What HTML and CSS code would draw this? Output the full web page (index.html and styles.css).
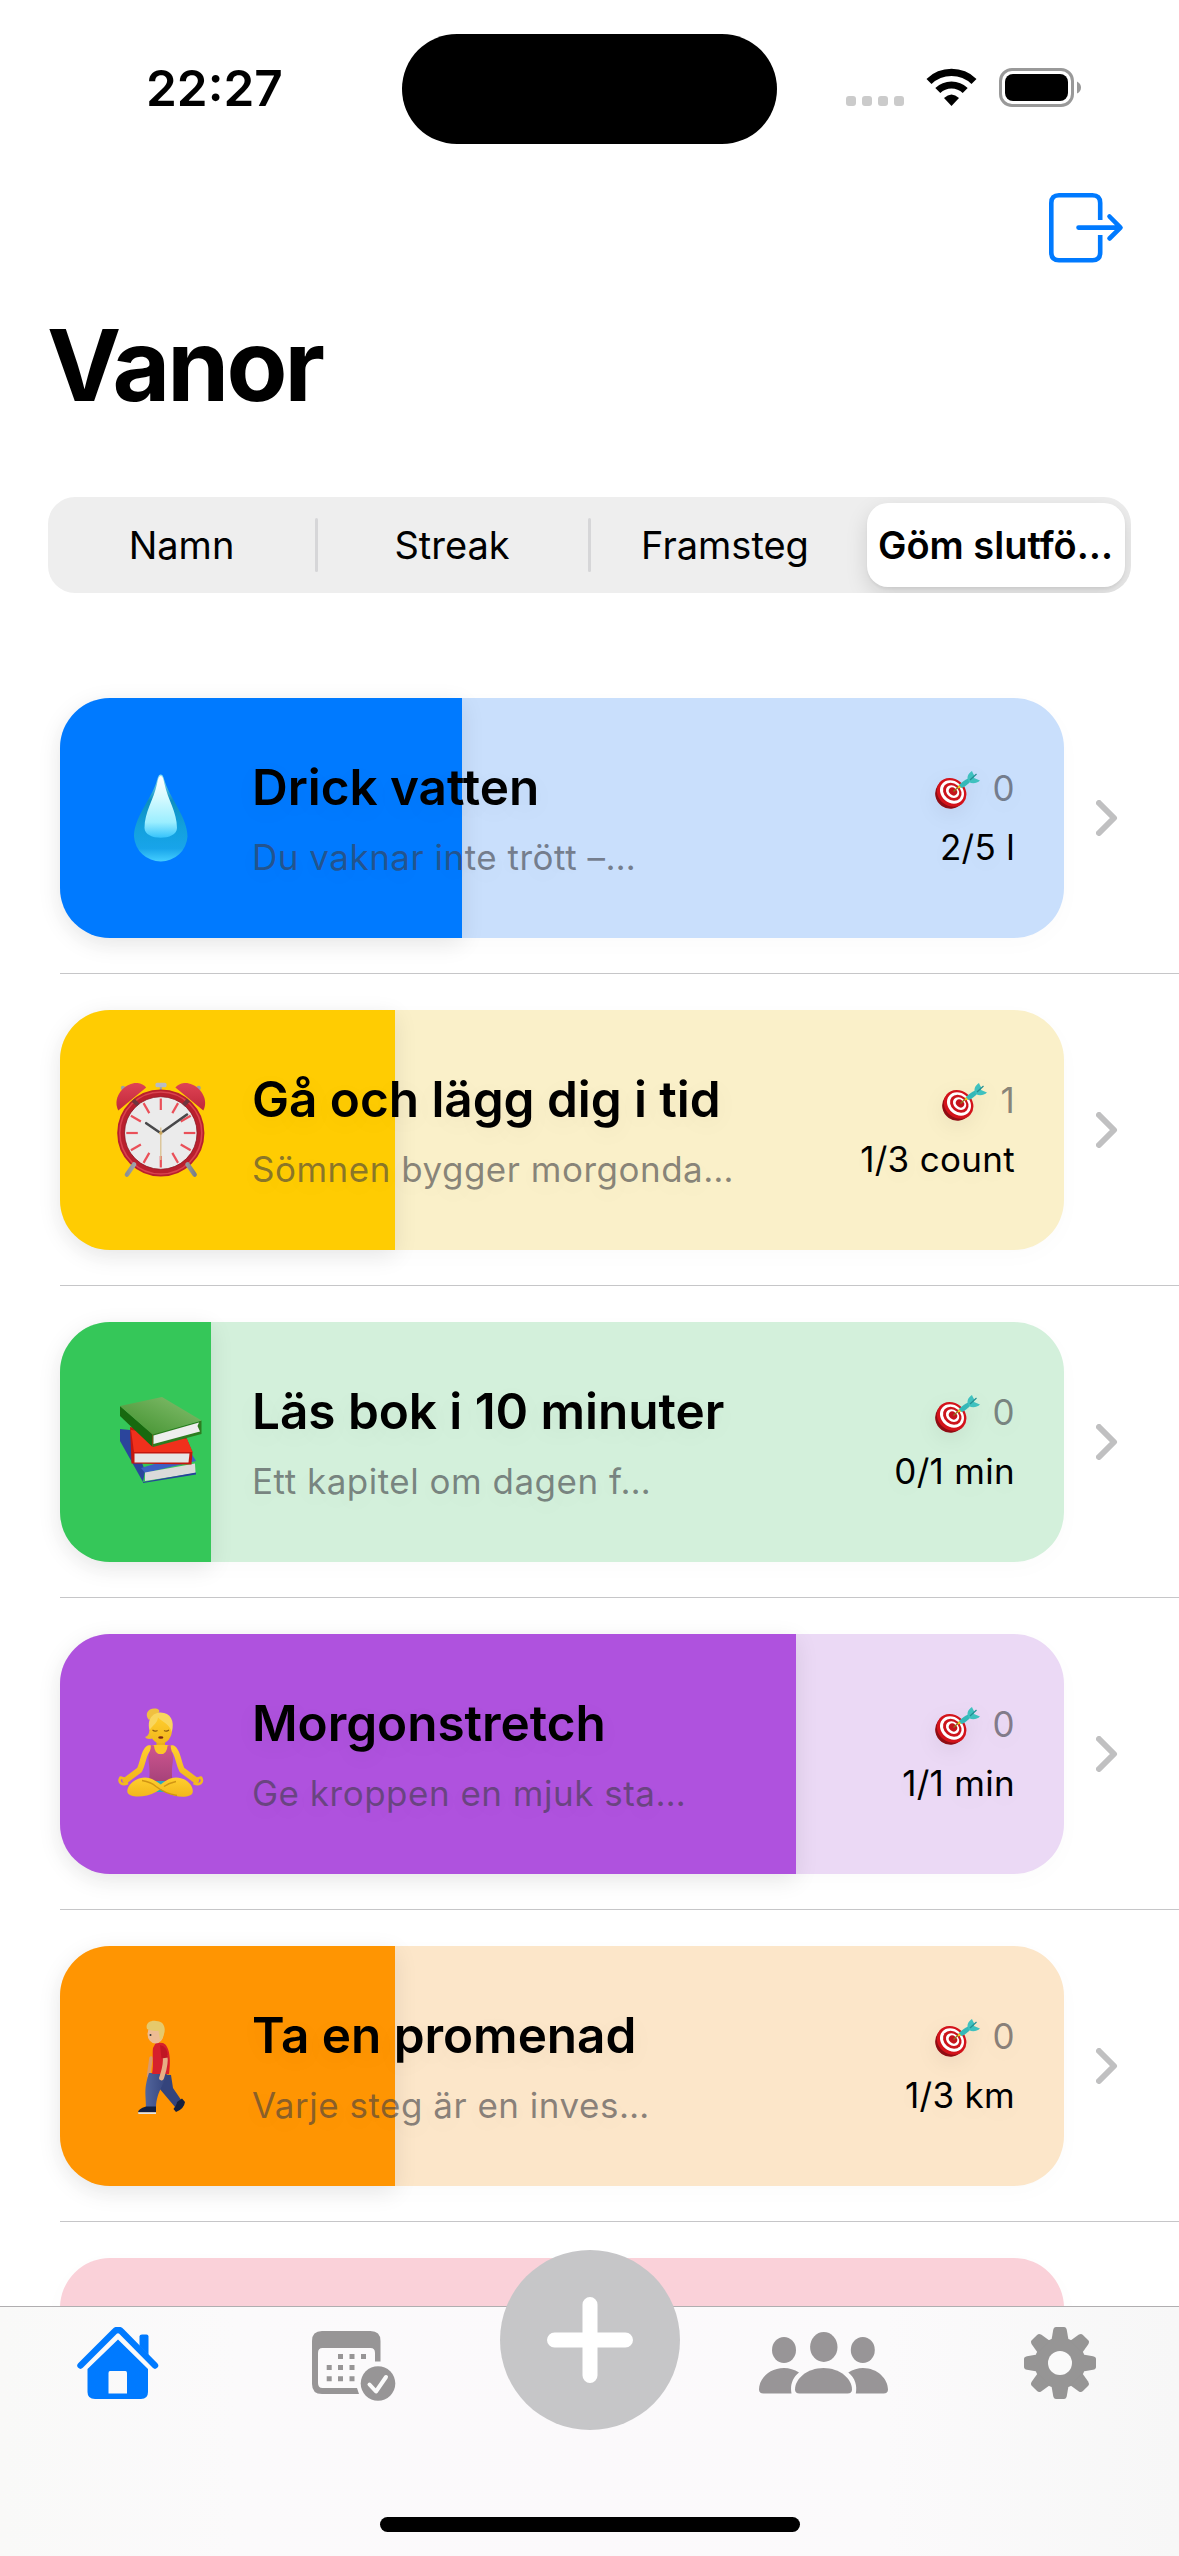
FILE: index.html
```html
<!DOCTYPE html>
<html lang="sv">
<head>
<meta charset="utf-8">
<title>Vanor</title>
<link rel="stylesheet" href="styles.css">
</head>
<body>
<svg width="0" height="0" class="defs" aria-hidden="true">
  <defs>
    <symbol id="target" viewBox="0 0 46 39">
      <ellipse cx="15" cy="23" rx="15" ry="14.5" transform="rotate(35 15 23)" fill="#8f0d14"/>
      <ellipse cx="16.6" cy="21.4" rx="15.6" ry="13.6" transform="rotate(40 16.6 21.4)" fill="#d3131b"/>
      <ellipse cx="17" cy="21" rx="12.8" ry="10.8" transform="rotate(40 17 21)" fill="#fff"/>
      <ellipse cx="17.3" cy="20.8" rx="10" ry="8.2" transform="rotate(40 17.3 20.8)" fill="#cc141c"/>
      <ellipse cx="17.6" cy="20.6" rx="7.2" ry="5.8" transform="rotate(40 17.6 20.6)" fill="#fff"/>
      <ellipse cx="18" cy="20.4" rx="4.5" ry="3.6" transform="rotate(40 18 20.4)" fill="#c4131b"/>
      <path d="M18.5 20.5L25 14.5" stroke="#8a7a20" stroke-width="1.2"/>
      <path d="M22.5 17.5L24 13.5L27 16.5Z" fill="#f2c81e"/>
      <path d="M24 14C27 10.5 31 8.5 34 7L36 10C33 13 30 16 26.5 17Z" fill="#35b8b8"/>
      <path d="M33 9C31.5 5 34 2 37 0C38 3 40 4 39 7L45 9.5C42 12.5 37 13 34 11Z" fill="#3fc1bf"/>
      <path d="M35 9L41.5 3" stroke="#258f92" stroke-width="1.2"/>
    </symbol>
    <symbol id="chevron" viewBox="0 0 22 36">
      <path d="M3 3L18 18L3 33" fill="none" stroke="#c0c0c1" stroke-width="6" stroke-linecap="round" stroke-linejoin="round"/>
    </symbol>
    <linearGradient id="dropOuter" x1="0" y1="0" x2="0" y2="1">
      <stop offset="0" stop-color="#8fe4f5"/><stop offset=".3" stop-color="#0d8fc0"/><stop offset=".6" stop-color="#12a0dc"/><stop offset=".85" stop-color="#18a4ea"/><stop offset="1" stop-color="#45ceff"/>
    </linearGradient>
    <linearGradient id="dropInner" x1="0" y1="0" x2="0" y2="1">
      <stop offset="0" stop-color="#fff"/><stop offset=".35" stop-color="#d5faff"/><stop offset=".75" stop-color="#9beeff"/><stop offset="1" stop-color="#35c3fb"/>
    </linearGradient>
    <linearGradient id="bell" x1="0" y1="0" x2="0" y2="1">
      <stop offset="0" stop-color="#df4354"/><stop offset="1" stop-color="#c0283a"/>
    </linearGradient>
    <linearGradient id="leg" x1="0" y1="0" x2="1" y2="0">
      <stop offset="0" stop-color="#8b9096"/><stop offset=".5" stop-color="#e4e7ea"/><stop offset="1" stop-color="#7b8087"/>
    </linearGradient>
    <linearGradient id="bookGreen" x1="0" y1="1" x2="1" y2="0">
      <stop offset="0" stop-color="#3f8f2c"/><stop offset="1" stop-color="#86c070"/>
    </linearGradient>
    <linearGradient id="skin" x1="0" y1="0" x2="0" y2="1">
      <stop offset="0" stop-color="#ffce2e"/><stop offset="1" stop-color="#f2b71c"/>
    </linearGradient>
    <linearGradient id="top" x1="0" y1="0" x2="0" y2="1">
      <stop offset="0" stop-color="#cf568f"/><stop offset="1" stop-color="#a6427a"/>
    </linearGradient>
    <linearGradient id="jeans" x1="0" y1="0" x2="1" y2="0">
      <stop offset="0" stop-color="#52659c"/><stop offset="1" stop-color="#34447c"/>
    </linearGradient>
  </defs>
</svg>

<div class="screen">
  <header class="status">
    <div class="time">22:27</div>
    <div class="island"></div>
    <div class="indicators">
      <svg width="236" height="40" viewBox="0 0 236 40">
        <g fill="#cbcbcb"><rect x="0" y="28" width="10" height="10" rx="3"/><rect x="16" y="28" width="10" height="10" rx="3"/><rect x="32" y="28" width="10" height="10" rx="3"/><rect x="48" y="28" width="10" height="10" rx="3"/></g>
        <g fill="none" stroke="#000" stroke-width="7.2">
          <path d="M83 13.5A32.5 32.5 0 0 1 128 13.5"/>
          <path d="M91.8 22.5A19.8 19.8 0 0 1 119.2 22.5"/>
        </g>
        <path d="M98 30Q105.5 23 113 30L105.5 38Z"/>
        <rect x="154.5" y="1.5" width="72" height="36" rx="11.5" fill="none" stroke="#999" stroke-width="3"/>
        <rect x="159" y="6" width="63" height="27" rx="8"/>
        <path d="M231 13.5Q235 15.5 235 19.5Q235 23.5 231 25.5Z" fill="#999"/>
      </svg>
    </div>
  </header>

  <nav class="toolbar">
    <svg width="76" height="70" viewBox="0 0 76 70" fill="none" stroke="#007aff" stroke-width="4.6" stroke-linejoin="round">
      <path d="M51.2 27V10Q51.2 2.3 43.5 2.3H10Q2.3 2.3 2.3 10V59.5Q2.3 67.2 10 67.2H43.5Q51.2 67.2 51.2 59.5V42"/>
      <path d="M29.5 34.6H71M60.5 23.5L71.5 34.6L60.5 45.5" stroke-linecap="round"/>
    </svg>
  </nav>

  <h1 class="title">Vanor</h1>

  <div class="segments">
    <div class="segment">Namn</div>
    <div class="segment">Streak</div>
    <div class="segment">Framsteg</div>
    <div class="segment selected">Göm slutfö…</div>
  </div>

  <main class="list">
    <section class="row">
      <article class="card blue">
        <div class="fill" style="width:40%"></div>
        <svg class="emoji" viewBox="0 0 96 96">
          <path d="M47.7 4.5C50 4.5 50.7 8 52 12C58 30 74.5 48 74.5 66.5A26.8 26.6 0 0 1 21 66.5C21 48 37.5 30 43.5 12C44.8 8 45.5 4.5 47.7 4.5Z" fill="url(#dropOuter)"/>
          <path d="M47.7 6C50 6 50.5 10 51.5 14C55 30 64 42 64 58C64 71 31.5 71 31.5 58C31.5 42 40.5 30 44 14C45 10 45.5 6 47.7 6Z" fill="url(#dropInner)"/>
        </svg>
        <div class="text"><h2>Drick vatten</h2><p>Du vaknar inte trött –…</p></div>
        <div class="stats"><div class="streak"><svg><use href="#target"/></svg>0</div><div>2/5 l</div></div>
      </article>
      <svg class="chevron"><use href="#chevron"/></svg>
    </section>

    <section class="row">
      <article class="card yellow">
        <div class="fill" style="width:33.333%"></div>
        <svg class="emoji" viewBox="0 0 96 96">
          <path d="M47.8 3V10" stroke="#9a9fa8" stroke-width="2"/><rect x="42.5" y="0.8" width="11" height="4.4" rx="1.5" fill="#b7bcc4"/>
          <circle cx="10" cy="6" r="2.2" fill="#9aa0a6"/><circle cx="85.6" cy="6" r="2.2" fill="#9aa0a6"/>
          <circle cx="47.8" cy="51" r="39.9" fill="#ebebeb" stroke="#b91f2d" stroke-width="7.4"/>
          <circle cx="47.8" cy="51" r="41" fill="none" stroke="#d9424e" stroke-width="1.6"/>
          <circle cx="47.8" cy="51" r="36.3" fill="none" stroke="#8f1a25" stroke-width=".8"/>
          <path d="M20 18L25 23M75.6 18L70.6 23" stroke="#70353d" stroke-width="4"/>
          <path d="M5.3 28.5C-1.5 15 12 0 24.500 1Q30 1.500 33.200 5.500Z" fill="url(#bell)"/>
          <path d="M90.300 28.500C97.100 15 83.600 0 71.100 1Q65.600 1.500 62.400 5.500Z" fill="url(#bell)"/>
          <g stroke="#ea5059" stroke-width="2.2">
            <path id="tick" d="M47.8 16.5V28"/>
            <use href="#tick" transform="rotate(30 47.8 51)"/><use href="#tick" transform="rotate(60 47.8 51)"/><use href="#tick" transform="rotate(90 47.8 51)"/><use href="#tick" transform="rotate(120 47.8 51)"/><use href="#tick" transform="rotate(150 47.8 51)"/><use href="#tick" transform="rotate(180 47.8 51)"/><use href="#tick" transform="rotate(210 47.8 51)"/><use href="#tick" transform="rotate(240 47.8 51)"/><use href="#tick" transform="rotate(270 47.8 51)"/><use href="#tick" transform="rotate(300 47.8 51)"/><use href="#tick" transform="rotate(330 47.8 51)"/>
          </g>
          <path d="M47.8 45.5V78" stroke="#d9c08e" stroke-width="1.3"/>
          <path d="M46 50L33.2 41.2M50 49.5L74 32.5" stroke="#48484a" stroke-width="2.6" stroke-linecap="round"/>
          <circle cx="47.8" cy="51" r="1.8" fill="#c9a55c"/>
          <path d="M21 82.500L14 92.500M74.600 82.500L81.600 92.500" stroke="url(#leg)" stroke-width="4.600" stroke-linecap="round"/>
        </svg>
        <div class="text"><h2>Gå och lägg dig i tid</h2><p>Sömnen bygger morgonda…</p></div>
        <div class="stats"><div class="streak"><svg><use href="#target"/></svg>1</div><div>1/3 count</div></div>
      </article>
      <svg class="chevron"><use href="#chevron"/></svg>
    </section>

    <section class="row">
      <article class="card green">
        <div class="fill" style="width:15%"></div>
        <svg class="emoji" viewBox="0 0 96 96">
          <path d="M7 35L17 36L32 77L30 88L7 47Z" fill="#2b459c"/>
          <path d="M28 74L78 59L83 67L32 79Z" fill="#3d5fc4"/>
          <path d="M32 78.5L82 69.5L82.6 79L32 87Z" fill="#dadada"/>
          <path d="M30 88L83 78.5V80.5L30 89Z" fill="#27429c"/>
          <path d="M17 33L73 43L79.5 58L78.5 70.5L18.5 69.5Z" fill="#c4170f"/>
          <path d="M18 36L74 45L79.5 58L21 58Z" fill="#f0301c"/>
          <path d="M21.5 59.5H76.5L75.5 68.5H21.5Z" fill="#e6e6e6"/>
          <path d="M7 12L39.5 40V53L7 22Z" fill="#17690f"/>
          <path d="M39.5 40L88.5 26.5L88.5 40L40 53Z" fill="#2d7d20"/>
          <path d="M7 12L49 3L88.5 26.5L39.5 40.5Z" fill="url(#bookGreen)"/>
          <path d="M40.5 41.5L86 28.5L84.5 32L87 37.5L40.5 50Z" fill="#eee"/>
        </svg>
        <div class="text"><h2>Läs bok i 10 minuter</h2><p>Ett kapitel om dagen f…</p></div>
        <div class="stats"><div class="streak"><svg><use href="#target"/></svg>0</div><div>0/1 min</div></div>
      </article>
      <svg class="chevron"><use href="#chevron"/></svg>
    </section>

    <section class="row">
      <article class="card purple">
        <div class="fill" style="width:73.3%"></div>
        <svg class="emoji" viewBox="0 0 96 96">
          <path d="M36 14C31 8 35 1.500 43 2.500C48 3.500 47 7 42 9.500Z" fill="#f0c040"/>
          <path d="M36.500 24Q36 30 32 31Q34 34.500 41 32Z" fill="#eebb2c"/>
          <path d="M43.500 33H52V44H43.500Z" fill="#e9ae1c"/>
          <path d="M36 39.500Q47.800 38 59.500 39.500Q60 44 58 48H38Q35.500 44 36 39.500Z" fill="#fcc729"/>
          <path d="M35.500 42.500C30.500 46 30.500 56 26.500 64L12.500 74.500M60 42.500C65 46 65 56 69 64L83 74.500" fill="none" stroke="url(#skin)" stroke-width="6" stroke-linecap="round" stroke-linejoin="round"/>
          <path d="M15 77C8 80 5 76 7.500 71.500L12.500 73M80.500 77C87.500 80 90.500 76 88 71.500L83 73" fill="none" stroke="#f2b920" stroke-width="2.600" stroke-linejoin="round"/>
          <path d="M38 39L41 39.500Q41.500 48 47.800 48.500Q54 48 54.600 39.500L57.600 39C57.600 44 60 47 60 52C60 58 58 62 59.500 76H36C37.500 62 35.500 58 35.500 52C35.500 47 38 44 38 39Z" fill="url(#top)"/>
          <path d="M38 75H59V86H38Z" fill="#2ba7c4"/>
          <path d="M32 71.500C21 71.500 13 81 14.500 86.500C17 92.500 33 91.500 43 86L47.800 83L53 86.500C62 91.500 77 92.500 79.500 87C81.500 81 74 71.500 63 71.500C56 71.500 51 76 47.800 78.500C44 76 39 71.500 32 71.500Z" fill="url(#skin)"/>
          <path d="M29 74.500Q38 76 43 80.500Q52 87.500 64 89.500M63 75.500Q56 77 51 80.500" fill="none" stroke="#d19514" stroke-width="1.300"/>
          <ellipse cx="47.8" cy="23.5" rx="11.300" ry="14" fill="url(#skin)"/>
          <path d="M36.500 24C33.500 11 42 6.500 47.500 6.500C57.500 6.500 62 15 58.800 26C57 19 50 16 45 11.500C44.500 17 39.500 19.500 36.500 24Z" fill="#f9d65e"/>
          <path d="M39.500 24Q42 26 44.500 24.500M51 24.500Q53.500 26 56 24" fill="none" stroke="#8b5a12" stroke-width="1.1"/>
          <ellipse cx="47.8" cy="31.500" rx="2.600" ry="1.200" fill="#7b2715"/>
        </svg>
        <div class="text"><h2>Morgonstretch</h2><p>Ge kroppen en mjuk sta…</p></div>
        <div class="stats"><div class="streak"><svg><use href="#target"/></svg>0</div><div>1/1 min</div></div>
      </article>
      <svg class="chevron"><use href="#chevron"/></svg>
    </section>

    <section class="row">
      <article class="card orange">
        <div class="fill" style="width:33.333%"></div>
        <svg class="emoji" viewBox="0 0 96 96">
          <path d="M38 40L35.5 58" stroke="#d99a6c" stroke-width="3.5" stroke-linecap="round"/>
          <path d="M43.5 56L58 57L60 70L69.5 84L62 89L46 70Z" fill="#34447c"/>
          <path d="M36 55H54C52 66 44 72 43 89H33C33 76 30.5 72 36 55Z" fill="url(#jeans)"/>
          <path d="M33 88.5H43L43 94.5H25Q25 91 33 88.5Z" fill="#15203f"/>
          <path d="M25 94.3H43V96H25.5Z" fill="#e6e6e6"/>
          <path d="M69 80.5L72 84Q71 91 63 94L60.5 91Q64 86 64 84Z" fill="#15203f"/>
          <path d="M43 24.500L50 25C57 28 58 42 56 56H39C41 46 39 36 40 30Z" fill="#d6202c"/>
          <path d="M52 38C53.500 46 51 52 48.500 60" fill="none" stroke="#e7af84" stroke-width="4.800" stroke-linecap="round"/>
          <path d="M47 27Q54.500 28 55 39.500L48.500 40.500Z" fill="#c01623"/>
          <ellipse cx="42.5" cy="16" rx="8" ry="9.5" fill="#edbc93"/>
          <path d="M34 11C32 5 38 2 43 3C51 3 53 10 51 16Q50 21 47 22L45.5 13Q38 13 34 11Z" fill="#e6c96b"/>
          <circle cx="37.5" cy="17" r="1" fill="#333"/>
        </svg>
        <div class="text"><h2>Ta en promenad</h2><p>Varje steg är en inves…</p></div>
        <div class="stats"><div class="streak"><svg><use href="#target"/></svg>0</div><div>1/3 km</div></div>
      </article>
      <svg class="chevron"><use href="#chevron"/></svg>
    </section>

    <section class="row">
      <article class="card pink"></article>
    </section>
  </main>

  <footer class="tabbar">
    <div class="tab">
      <svg width="82" height="73" viewBox="0 0 82 73" fill="#007aff">
        <path d="M3.5 38.5L37.5 4.5Q41 1.2 44.5 4.5L78 38.5" fill="none" stroke="#007aff" stroke-width="6.4" stroke-linecap="round"/>
        <path d="M62.5 9.5Q62.5 7.5 65 7.5H69.5Q71.5 7.5 71.5 9.5V28L62.5 19Z"/>
        <path d="M41 12.5L71 42V65Q71 72 64 72H18Q10.5 72 10.5 65V42ZM33 44Q31.5 44 31.5 46V66.5H50V46Q50 44 48.5 44Z" fill-rule="evenodd"/>
      </svg>
    </div>
    <div class="tab">
      <svg width="84" height="71" viewBox="0 0 84 71" fill="#979596">
        <path d="M10 0H58.5Q68.5 0 68.5 10V30.5H63V22Q63 17 58.5 17H10.5Q6 17 6 22V52Q6 57 10.5 57H45L47 63H10Q0 63 0 53V10Q0 0 10 0Z"/>
        <path d="M26 23h5v5h-5zM37.5 23h5v5h-5zM49 23h5v5h-5zM14.7 34h5v5h-5zM26 34h5v5h-5zM37.5 34h5v5h-5zM14.7 45.3h5v5h-5zM26 45.3h5v5h-5zM37.5 45.3h5v5h-5z"/>
        <circle cx="66" cy="52.5" r="17.3"/>
        <path d="M57.5 53.5L64 60.5L74 46" fill="none" stroke="#fafafa" stroke-width="4" stroke-linecap="round" stroke-linejoin="round"/>
      </svg>
    </div>
    <div class="tab">
      <div class="add">
        <svg width="86" height="86" viewBox="0 0 86 86"><path d="M43 7.5V78.5M7.5 43H78.5" stroke="#fff" stroke-width="15" stroke-linecap="round"/></svg>
      </div>
    </div>
    <div class="tab">
      <svg width="130" height="62" viewBox="0 0 130 62" fill="#989597">
        <ellipse cx="64.8" cy="15" rx="13.7" ry="15"/>
        <ellipse cx="25" cy="18" rx="12" ry="13"/><ellipse cx="103.8" cy="18" rx="12" ry="13"/>
        <path d="M36 57.5C36 47 48 36 64.5 36S93 47 93 57.5Q93 61.5 88.5 61.5H40.5Q36 61.5 36 57.5Z"/>
        <path d="M40 40.5C33 46 31 54 32.5 61.5H4.5Q0 61.5 0 57.5C0 47 10 36 25 36Q33 36 40 40.5Z"/>
        <path d="M89.3 40.5C96.3 46 98.3 54 96.8 61.5H124.5Q129 61.5 129 57.5C129 47 118.5 36 104 36Q96.3 36 89.3 40.5Z"/>
      </svg>
    </div>
    <div class="tab">
      <svg width="72" height="72" viewBox="-36 -36 72 72">
        <g fill="#969595">
          <circle r="25.5"/>
          <path id="tooth" d="M-8.5 -23L-6.8 -33Q-6.2 -36 -4 -36H4Q6.2 -36 6.8 -33L8.5 -23Z"/>
          <use href="#tooth" transform="rotate(45)"/><use href="#tooth" transform="rotate(90)"/><use href="#tooth" transform="rotate(135)"/><use href="#tooth" transform="rotate(180)"/><use href="#tooth" transform="rotate(225)"/><use href="#tooth" transform="rotate(270)"/><use href="#tooth" transform="rotate(315)"/>
        </g>
        <circle r="12" fill="#fafafa"/>
      </svg>
    </div>
    <div class="home-indicator"></div>
  </footer>
</div>
</body>
</html>
```
FILE: styles.css
```css
* { box-sizing: border-box; margin: 0; padding: 0; }

body {
  background: #fff;
  color: #000;
  font-family: Inter, "Liberation Sans", sans-serif;
}

svg { display: block; flex: none; }
.defs { position: absolute; }

.screen {
  position: relative;
  width: 1179px;
  height: 2556px;
  overflow: hidden;
  background: #fff;
}

.status { display: grid; grid-template-columns: 402px 375px 402px; height: 177px; padding-top: 34px; }
.time { padding: 24px 0 0 146px; font-size: 49.5px; font-weight: 600; line-height: 60px; white-space: nowrap; }
.island { height: 110px; border-radius: 55px; background: #000; }
.indicators { padding: 34px 0 0 69px; }

.toolbar { display: flex; justify-content: flex-end; height: 132px; padding: 16px 54px 0 0; }

.title { height: 188px; padding-left: 47px; font-size: 99.5px; font-weight: 700; line-height: 112px; letter-spacing: -2.9px; white-space: nowrap; }

.segments {
  display: grid;
  grid-template-columns: 268px 273px 273px 268px;
  width: 1083px;
  height: 96px;
  margin-left: 48px;
  padding: 6px 0;
  border-radius: 27px;
  background: #eee;
  overflow: hidden;
}
.segment { display: flex; align-items: center; justify-content: center; position: relative; padding-right: 1px; font-size: 38px; line-height: 46px; white-space: nowrap; }
.segment + .segment:not(.selected)::before { content: ""; position: absolute; left: -1px; top: 15px; width: 3px; height: 54px; border-radius: 2px; background: #d6d6d8; }
.segment.selected { margin: 0 5px; border-radius: 21px; background: #fff; font-weight: 600; box-shadow: 0 8px 22px rgba(0, 0, 0, .13), 0 2px 3px rgba(0, 0, 0, .05); }

.list { padding-top: 70px; }
.row { display: flex; align-items: center; gap: 32px; height: 312px; padding: 0 0 2px 60px; position: relative; }
.row::after { content: ""; position: absolute; left: 60px; right: 0; bottom: 1px; height: 1px; background: #c6c6c8; }

.card {
  position: relative;
  display: flex;
  align-items: center;
  width: 1004px;
  height: 240px;
  padding: 0 49px 0 53px;
  border-radius: 50px;
  box-shadow: 0 6px 24px rgba(0, 0, 0, .02);
}
.fill { position: absolute; left: 0; top: 0; height: 240px; border-radius: 50px 0 0 50px; box-shadow: 0 6px 24px rgba(0, 0, 0, .09); }
.blue { background: #c9dffc; }
.blue .fill { background: #007aff; }
.yellow { background: #faf0c9; }
.yellow .fill { background: #ffcc02; }
.green { background: #d3f0db; }
.green .fill { background: #35c759; }
.purple { background: #ebd9f5; }
.purple .fill { background: #af52de; }
.orange { background: #fce6c9; }
.orange .fill { background: #ff9502; }
.pink { background: #fad1d9; }

.emoji { position: relative; width: 96px; height: 96px; margin-right: 43px; }
.text { position: relative; flex: 1; display: flex; flex-direction: column; gap: 18px; white-space: nowrap; text-shadow: 0 6px 24px rgba(0, 0, 0, .05); }
.text h2 { font-size: 49.5px; font-weight: 600; line-height: 60px; letter-spacing: -.05px; }
.text p { font-size: 35px; line-height: 44px; letter-spacing: .5px; color: rgba(60, 60, 67, .6); }
.stats { position: relative; display: flex; flex-direction: column; align-items: flex-end; gap: 15px; font-size: 35px; line-height: 44px; letter-spacing: .3px; white-space: nowrap; text-shadow: 0 6px 24px rgba(0, 0, 0, .05); }
.streak { display: flex; align-items: center; gap: 12px; margin-top: -1px; color: rgba(60, 60, 67, .6); }
.streak svg { width: 46px; height: 39px; margin-top: 4px; filter: drop-shadow(0 6px 10px rgba(0, 0, 0, .06)); }
.chevron { width: 22px; height: 36px; }

.tabbar {
  position: absolute;
  left: 0;
  bottom: 0;
  display: grid;
  grid-template-columns: repeat(5, 1fr);
  width: 100%;
  height: 250px;
  border-top: 1px solid #b0aeb0;
  background: linear-gradient(90deg, #f9f9f8 0, #fbfafb 20%, #fbf9fb 50%, #fbfafb 75%, #f7f7f7 100%);
}
.tab { display: flex; justify-content: center; align-items: flex-start; padding-top: 20px; }
.tab:nth-child(2) { padding: 24px 0 0 1px; }
.tab:nth-child(4) { padding: 25px 3px 0 0; }
.tab:nth-child(3) { padding: 0 0 0 1px; }
.tab:nth-child(5) { padding-right: 2px; }
.add { display: flex; flex: none; align-items: center; justify-content: center; width: 180px; height: 180px; margin-top: -57px; border-radius: 50%; background: #c6c6c8; }
.home-indicator { position: absolute; left: 380px; bottom: 24px; width: 420px; height: 15px; border-radius: 8px; background: #000; }
```
